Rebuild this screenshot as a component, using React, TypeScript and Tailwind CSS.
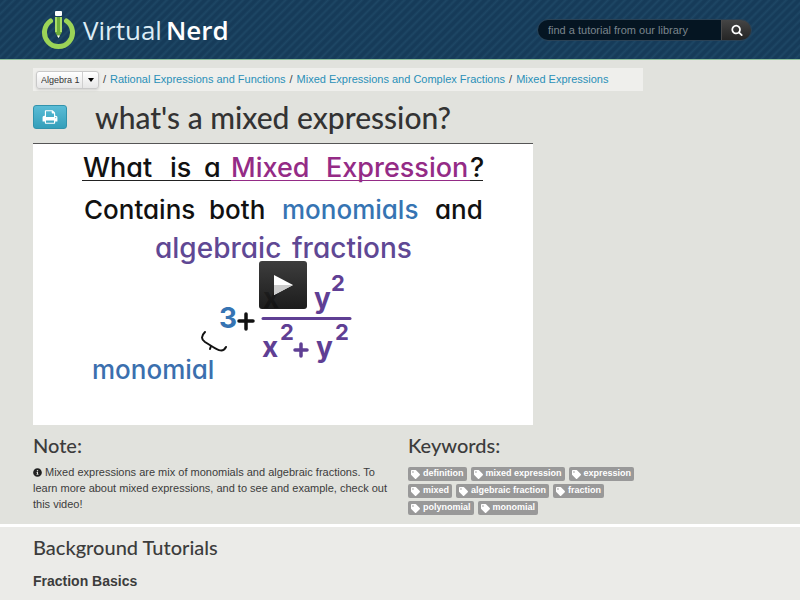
import { FaInfoCircle, FaTag } from 'react-icons/fa';

const crumbs = [
  'Rational Expressions and Functions',
  'Mixed Expressions and Complex Fractions',
  'Mixed Expressions',
];

const keywords = [
  'definition',
  'mixed expression',
  'expression',
  'mixed',
  'algebraic fraction',
  'fraction',
  'polynomial',
  'monomial',
];

function Logo() {
  return (
    <a href="#home" className="flex items-center gap-2 text-[#dcecf5]">
      <svg viewBox="0 0 34 40" className="h-10 w-[34px]" aria-hidden="true">
        <path
          d="M9.500 11A14 14 0 1 0 25.500 11"
          fill="none"
          stroke="#9bd457"
          strokeWidth="5"
          strokeLinecap="round"
        />
        <rect x="14" y="1" width="7" height="5" rx="1" fill="#fff" />
        <path d="M14 7h7v15l-3.500 6-3.500-6z" fill="#6fae3c" />
        <path d="M14 7h2v15h-2zM19 7h2v15h-2z" fill="#a9dc68" />
        <path d="M16 25.400h3L17.500 28z" fill="#fff" />
      </svg>
      <span className="flex gap-1 font-['Open_Sans','Noto_Sans',sans-serif] text-[26px] leading-8">
        Virtual <b className="font-semibold text-white">Nerd</b>
      </span>
    </a>
  );
}

function Header() {
  return (
    <header className="flex h-[60px] items-center justify-between border-b border-[#8fc09a] bg-[#173d5b] bg-[repeating-linear-gradient(135deg,#163b59_0px,#163b59_2px,#1e4765_4px,#163b59_6px)] pr-12 pl-[41px]">
      <Logo />
      <form className="flex h-[22px] overflow-hidden rounded-full border border-[#2a4256]">
        <label htmlFor="search" className="sr-only">Search tutorials</label>
        <input
          id="search"
          type="text"
          placeholder="find a tutorial from our library"
          className="w-[183px] bg-[#051522] pl-[10px] text-[11px] leading-4 text-gray-300 outline-none placeholder:text-[#7b858d]"
        />
        <button
          type="button"
          aria-label="Search"
          className="flex w-[30px] items-center justify-center border-l border-[#4a4a4a] bg-linear-to-b from-[#454545] to-[#252525] text-white"
        >
          <svg viewBox="0 0 1792 1792" className="size-3" fill="currentColor" aria-hidden="true">
            <path d="M1216 832q0-185-131.500-316.500t-316.500-131.500-316.500 131.500-131.500 316.500 131.500 316.500 316.500 131.500 316.500-131.500 131.500-316.500zm512 832q0 52-38 90t-90 38q-54 0-90-38l-343-342q-179 124-399 124-143 0-273.500-55.500t-225-150-150-225-55.500-273.500 55.500-273.500 150-225 225-150 273.500-55.500 273.500 55.500 225 150 150 225 55.500 273.500q0 220-124 399l343 343q37 37 37 90z" />
          </svg>
        </button>
      </form>
    </header>
  );
}

function Breadcrumb() {
  return (
    <nav aria-label="Breadcrumb" className="flex h-[23px] max-w-[610px] items-center bg-[#efefec] pl-[3px] text-[11px] whitespace-nowrap">
      <div className="relative h-[18px] rounded-[3px] border border-[#c9c9c9] bg-linear-to-b from-white to-[#e6e6e6] shadow-sm">
        <label htmlFor="course" className="sr-only">Course</label>
        <select id="course" className="block h-4 w-[61px] appearance-none bg-transparent pl-1 text-[9px] leading-4 text-[#333] outline-none">
          <option>Algebra 1</option>
        </select>
        <span className="pointer-events-none absolute inset-y-0 right-0 flex w-4 items-center justify-center border-l border-[#cfcfcf]">
          <span className="border-x-3 border-t-4 border-x-transparent border-t-black" />
        </span>
      </div>
      <ol className="flex pb-px leading-4">
        {crumbs.map((crumb) => (
          <li key={crumb}>
            <span className="px-1 text-[#444]">/</span>
            <a href="#topic" className="text-[#2a8fb8] hover:underline">{crumb}</a>
          </li>
        ))}
      </ol>
    </nav>
  );
}

function Poster() {
  return (
    <svg
      viewBox="0 0 500 281"
      className="block w-full font-['Inter','Open_Sans',sans-serif] text-[26px] font-medium [font-feature-settings:'cv11']"
      fill="#111"
    >
      <g className="text-[27px]">
        <text x="50" y="33">What</text>
        <text x="137" y="33">is</text>
        <text x="171" y="33">a</text>
        <text x="198" y="33" fill="#942b86">Mixed</text>
        <text x="293" y="33" fill="#942b86">Expression</text>
        <text x="437" y="33">?</text>
      </g>
      <path d="M49 36.500h149M437 36.500h13" stroke="#222" />
      <path d="M198 36.500h239" stroke="#942b86" />
      <text x="51" y="75">Contains</text>
      <text x="176" y="75">both</text>
      <text x="249" y="75" fill="#3674b3">monomials</text>
      <text x="402" y="75">and</text>
      <g fill="#5f4894" className="text-[28px]">
        <text x="122" y="114">algebraic</text>
        <text x="259" y="114">fractions</text>
      </g>
      <text x="186" y="184" fill="#3674b3" className="text-[28px] font-bold">3</text>
      <path d="M206 177h14M213 170v15" stroke="#111" strokeWidth="3.500" strokeLinecap="round" />
      <g fill="#5f3f94" className="text-[28px] font-bold">
        <text x="230" y="164" fill="#222">x</text>
        <text x="281" y="164">y</text>
        <text x="298" y="147" className="text-[22px]">2</text>
        <path d="M230 174.500h87" stroke="#5f3f94" strokeWidth="3" strokeLinecap="round" />
        <text x="229" y="213">x</text>
        <text x="247" y="196" className="text-[22px]">2</text>
        <path d="M262 206h12M268 200v12" stroke="#5f3f94" strokeWidth="3.500" strokeLinecap="round" />
        <text x="283" y="213">y</text>
        <text x="302" y="196" className="text-[22px]">2</text>
      </g>
      <path
        d="M172 188c-4 4-4 7 0 10l8 5c5 3 10 6 13 0M178 202l-1 3"
        fill="none"
        stroke="#111"
        strokeWidth="2"
        strokeLinecap="round"
      />
      <text x="59" y="235" fill="#3b6fae">monomial</text>
    </svg>
  );
}

export default function App() {
  return (
    <div className="flex min-h-screen flex-col bg-[#e1e2dd] font-['Liberation_Sans',Arial,sans-serif] text-[#3c3c3c]">
      <Header />

      <main className="flex grow flex-col">
        <section className="px-[33px] pt-2 pb-[9px]">
          <Breadcrumb />

          <div className="flex h-[52px] items-center gap-7">
            <button
              type="button"
              aria-label="Print"
              className="flex h-6 w-[34px] items-center justify-center rounded-[3px] border border-[#3193ac] bg-linear-to-b from-[#5abcd6] to-[#339fba] text-white"
            >
              <svg viewBox="0 0 1792 1792" className="size-4" fill="currentColor" aria-hidden="true">
                <path d="M448 1536h896v-256h-896v256zm0-640h896v-384h-160q-40 0-68-28t-28-68v-160h-640v640zm1152 64q0-26-19-45t-45-19-45 19-19 45 19 45 45 19 45-19 19-45zm128 0v416q0 13-9.500 22.500t-22.500 9.500h-224v160q0 40-28 68t-68 28h-960q-40 0-68-28t-28-68v-160h-224q-13 0-22.500-9.500t-9.500-22.500v-416q0-79 56.500-135.500t135.500-56.500h64v-544q0-40 28-68t68-28h672q40 0 88 20t76 48l152 152q28 28 48 76t20 88v256h64q79 0 135.500 56.500t56.500 135.500z" />
              </svg>
            </button>
            <h1 className="font-['Lato','Open_Sans',sans-serif] text-[30px] leading-9 font-medium text-[#333]">
              what's a mixed expression?
            </h1>
          </div>

          {/* Video */}
          <div className="relative max-w-[500px] border-t border-[#555] bg-white">
            <Poster />
            <button
              type="button"
              aria-label="Play video"
              className="absolute inset-0 m-auto flex size-12 items-center justify-center rounded-[3px] bg-linear-to-b from-[#333]/95 to-[#111]/95"
            >
              <svg viewBox="0 0 20 20" className="size-5" aria-hidden="true">
                <path d="M1 0l19 10L1 20z" fill="#fff" />
                <path d="M1 10h19L1 20z" fill="#ccc" />
              </svg>
            </button>
          </div>

          <div className="grid max-w-[610px] grid-cols-[355px_1fr] gap-5 pt-2">
            <div>
              <h2 className="font-['Lato','Open_Sans',sans-serif] text-xl leading-6 font-medium">Note:</h2>
              <p className="pt-[7px] text-[11px] leading-4">
                <FaInfoCircle className="mr-[3px] inline size-[9px] align-[-1px] text-[#222]" />
                Mixed expressions are mix of monomials and algebraic fractions. To learn more about
                mixed expressions, and to see and example, check out this video!
              </p>
            </div>
            <div>
              <h2 className="font-['Lato','Open_Sans',sans-serif] text-xl leading-6 font-medium">Keywords:</h2>
              <ul className="flex flex-wrap gap-x-1 gap-y-[3px] pt-[10px]">
                {keywords.map((keyword) => (
                  <li key={keyword}>
                    <a
                      href="#keyword"
                      className="flex h-[14px] items-center gap-[3px] rounded-xs bg-[#999] px-[3px] text-[9px] font-bold text-white"
                    >
                      <FaTag className="size-[9px]" />
                      {keyword}
                    </a>
                  </li>
                ))}
              </ul>
            </div>
          </div>
        </section>

        {/* Background tutorials */}
        <section className="grow border-t-3 border-white bg-[#ebebe8] px-[33px] pt-2">
          <h2 className="font-['Lato','Open_Sans',sans-serif] text-xl leading-6 font-medium">Background Tutorials</h2>
          <h3 className="pt-3 text-sm leading-5 font-bold">Fraction Basics</h3>
        </section>
      </main>
    </div>
  );
}
